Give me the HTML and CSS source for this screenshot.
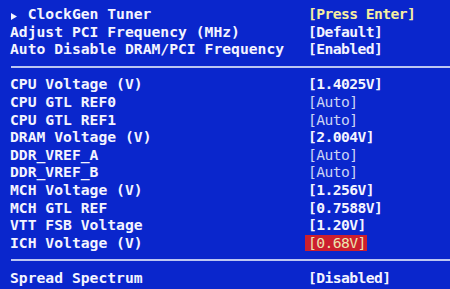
FILE: index.html
```html
<!DOCTYPE html>
<html>
<head>
<meta charset="utf-8">
<link rel="stylesheet" href="styles.css">
</head>
<body>
<div class="bios">
  <div class="row"><span class="label"><span class="arrow"><svg width="6" height="7" viewBox="0 0 6 7"><polygon points="0,0 6,3.5 0,7" fill="#f4f4ff"/></svg></span> ClockGen Tuner</span><span class="val yellow">[Press Enter]</span></div>
  <div class="row"><span class="label">Adjust PCI Frequency (MHz)</span><span class="val">[Default]</span></div>
  <div class="row"><span class="label">Auto Disable DRAM/PCI Frequency</span><span class="val">[Enabled]</span></div>
  <div class="sep"></div>
  <div class="row"><span class="label">CPU Voltage (V)</span><span class="val">[1.4025V]</span></div>
  <div class="row"><span class="label">CPU GTL REF0</span><span class="val auto">[Auto]</span></div>
  <div class="row"><span class="label">CPU GTL REF1</span><span class="val auto">[Auto]</span></div>
  <div class="row"><span class="label">DRAM Voltage (V)</span><span class="val">[2.004V]</span></div>
  <div class="row"><span class="label">DDR_VREF_A</span><span class="val auto">[Auto]</span></div>
  <div class="row"><span class="label">DDR_VREF_B</span><span class="val auto">[Auto]</span></div>
  <div class="row"><span class="label">MCH Voltage (V)</span><span class="val">[1.256V]</span></div>
  <div class="row"><span class="label">MCH GTL REF</span><span class="val">[0.7588V]</span></div>
  <div class="row"><span class="label">VTT FSB Voltage</span><span class="val">[1.20V]</span></div>
  <div class="row"><span class="label">ICH Voltage (V)</span><span class="val"><span class="hl">[0.68V]</span></span></div>
  <div class="sep"></div>
  <div class="row"><span class="label">Spread Spectrum</span><span class="val">[Disabled]</span></div>
</div>
</body>
</html>
```
FILE: styles.css
```css
html, body {
  margin: 0;
  padding: 0;
  background: #0a26cc;
  width: 450px;
  height: 289px;
  overflow: hidden;
}
.bios {
  padding: 5px 0 0 10px;
  font-family: "DejaVu Sans Mono", "Liberation Mono", monospace;
  font-weight: bold;
  font-size: 14.7px;
  line-height: 17.6px;
  color: #f4f4ff;
}
.row {
  display: grid;
  grid-template-columns: 298px 1fr;
  height: 17.6px;
  white-space: pre;
}
.arrow {
  display: inline-block;
  width: 1ch;
  text-align: left;
}
.arrow svg {
  vertical-align: -0.5px;
  margin-left: 1px;
}
.val {
  letter-spacing: -0.6px;
}
.yellow {
  color: #f6eea0;
}
.auto {
  font-weight: normal;
  color: #ccd4f4;
}
.hl {
  display: inline-block;
  background: #cc1f2e;
  color: #ece4b0;
  font-weight: normal;
  padding: 0 1px 0 3px;
  margin-left: -3px;
  line-height: 16px;
  margin-top: 1px;
}
.sep {
  height: 17.6px;
  display: flex;
  align-items: center;
  margin-left: 1px;
}
.sep::before {
  content: "";
  display: block;
  height: 2px;
  width: 100%;
  background: #bcc6f2;
}
```
